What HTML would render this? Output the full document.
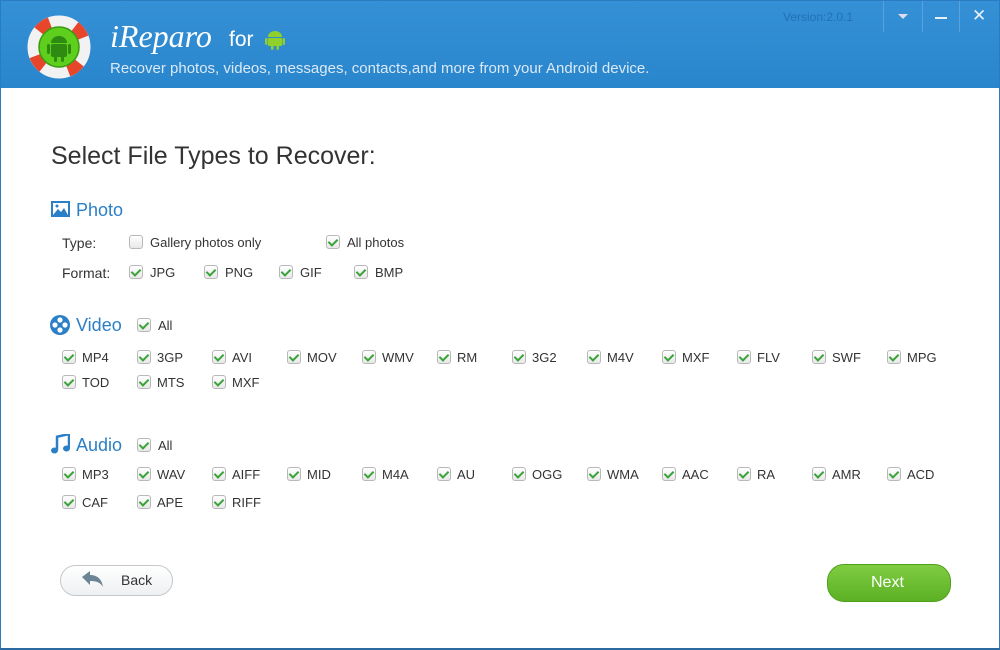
<!DOCTYPE html>
<html><head><meta charset="utf-8"><style>
*{margin:0;padding:0;box-sizing:border-box}
body{width:1000px;height:650px;overflow:hidden;background:#fff;font-family:"Liberation Sans",sans-serif;position:relative}
.win{position:absolute;left:0;top:0;width:1000px;height:650px;border:1px solid #2a7cc0;border-bottom:2px solid #2a6aa0}
.hdr{position:absolute;left:0;top:0;width:1000px;height:88px;background:linear-gradient(#3590d6,#2a86cc);}
.t{position:absolute;white-space:nowrap;font-size:13px;color:#333}
.cb{position:absolute;width:14px;height:14px;border:1px solid #b8b8b8;border-radius:3px;background:linear-gradient(#fff,#e8e8e8)}
.cb.c::after{content:"";position:absolute;left:3px;top:1px;width:4px;height:7px;border:solid #3aa33a;border-width:0 2px 2px 0;transform:rotate(45deg)}
.h{position:absolute;font-size:18px;color:#2a7fc6;white-space:nowrap}
.btn{position:absolute;border-radius:17px}
</style></head><body>
<div class="hdr">
<svg style="position:absolute;left:27px;top:15px" width="64" height="64" viewBox="0 0 64 64">
<circle cx="32" cy="32" r="26" fill="none" stroke="#f2f2f2" stroke-width="11"/>
<circle cx="32" cy="32" r="26" fill="none" stroke="#e8462a" stroke-width="11" stroke-dasharray="14 26.85" transform="rotate(-52 32 32)"/>
<circle cx="32" cy="32" r="20" fill="#5fcf1e" stroke="#3a9a10" stroke-width="1.5"/>
<rect x="24" y="29" width="16" height="13" rx="2" fill="#2f8a12"/>
<path d="M24 28a8 7 0 0 1 16 0z" fill="#2f8a12"/>
<rect x="20" y="29" width="3" height="10" rx="1.5" fill="#2f8a12"/><rect x="41" y="29" width="3" height="10" rx="1.5" fill="#2f8a12"/>
<rect x="27" y="41" width="3" height="6" rx="1.5" fill="#2f8a12"/><rect x="34" y="41" width="3" height="6" rx="1.5" fill="#2f8a12"/>
</svg>
<div class="t" style="left:110px;top:18px;font-family:'Liberation Serif',serif;font-style:italic;font-size:32px;color:#fff">iReparo</div>
<div class="t" style="left:229px;top:28px;font-size:21px;color:#fff">for</div>
<svg style="position:absolute;left:265px;top:29px" width="20" height="22" viewBox="0 0 20 22"><path d="M3 8a7 6 0 0 1 14 0z" fill="#8fd12a"/><rect x="3" y="9" width="14" height="8" rx="1" fill="#8fd12a"/><rect x="0" y="9" width="2.5" height="7" rx="1.2" fill="#8fd12a"/><rect x="17.5" y="9" width="2.5" height="7" rx="1.2" fill="#8fd12a"/><rect x="6" y="16" width="2.5" height="5" rx="1.2" fill="#8fd12a"/><rect x="11.5" y="16" width="2.5" height="5" rx="1.2" fill="#8fd12a"/></svg>
<div class="t" style="left:110px;top:60px;font-size:15px;color:#dbe9f6">Recover photos, videos, messages, contacts,and more from your Android device.</div>
<div class="t" style="left:783px;top:10px;font-size:12px;color:#2272b4">Version:2.0.1</div>
<div style="position:absolute;left:883px;top:0;width:1px;height:32px;background:#5aa2dc"></div>
<div style="position:absolute;left:922px;top:0;width:1px;height:32px;background:#5aa2dc"></div>
<div style="position:absolute;left:959px;top:0;width:1px;height:32px;background:#5aa2dc"></div>
<div style="position:absolute;left:898px;top:14px;width:0;height:0;border-left:5px solid transparent;border-right:5px solid transparent;border-top:5px solid #dde"></div>
<div style="position:absolute;left:935px;top:17px;width:12px;height:2px;background:#e8f0f8"></div>
<div class="t" style="left:972px;top:6px;font-size:17px;color:#e8f0f8">✕</div>
</div>
<div class="win"></div>
<div class="t" style="left:51px;top:142px;font-size:25px;color:#333">Select File Types to Recover:</div>

<svg style="position:absolute;left:51px;top:201px" width="19" height="16" viewBox="0 0 19 16"><rect x="0" y="0" width="19" height="16" fill="#2a7fc6"/><rect x="2" y="2" width="15" height="12" fill="#fff"/><path d="M2 14l5-6 3 3 3-4 4 7z" fill="#2a7fc6"/><circle cx="6" cy="5" r="1.5" fill="#2a7fc6"/></svg>
<div class="h" style="left:76px;top:200px">Photo</div>
<div class="t" style="left:62px;top:235px;font-size:14px">Type:</div>
<div class="t" style="left:62px;top:265px;font-size:14px">Format:</div>
<div class="cb" style="left:129px;top:235px"></div><div class="t" style="left:150px;top:235px">Gallery photos only</div>
<div class="cb c" style="left:326px;top:235px"></div><div class="t" style="left:347px;top:235px">All photos</div>
<div class="cb c" style="left:129px;top:265px"></div><div class="t" style="left:150px;top:265px">JPG</div>
<div class="cb c" style="left:204px;top:265px"></div><div class="t" style="left:225px;top:265px">PNG</div>
<div class="cb c" style="left:279px;top:265px"></div><div class="t" style="left:300px;top:265px">GIF</div>
<div class="cb c" style="left:354px;top:265px"></div><div class="t" style="left:375px;top:265px">BMP</div>

<svg style="position:absolute;left:50px;top:315px" width="20" height="20" viewBox="0 0 20 20"><circle cx="10" cy="10" r="10" fill="#2a7fc6"/><circle cx="10" cy="5" r="2.6" fill="#fff"/><circle cx="10" cy="15" r="2.6" fill="#fff"/><circle cx="5" cy="10" r="2.6" fill="#fff"/><circle cx="15" cy="10" r="2.6" fill="#fff"/></svg>
<div class="h" style="left:76px;top:315px">Video</div>
<div class="cb c" style="left:137px;top:318px"></div><div class="t" style="left:158px;top:318px">All</div>

<svg style="position:absolute;left:51px;top:434px" width="19" height="20" viewBox="0 0 19 20"><path d="M5 3l13-3v14" fill="none" stroke="#2a7fc6" stroke-width="2.5"/><path d="M6 3v13" stroke="#2a7fc6" stroke-width="2.5"/><ellipse cx="3.5" cy="16.5" rx="3.5" ry="3" fill="#2a7fc6"/><ellipse cx="15.5" cy="14.5" rx="3.5" ry="3" fill="#2a7fc6"/></svg>
<div class="h" style="left:76px;top:435px">Audio</div>
<div class="cb c" style="left:137px;top:438px"></div><div class="t" style="left:158px;top:438px">All</div>

<div id="grid"></div>
<script>
var rows=[[350,["MP4","3GP","AVI","MOV","WMV","RM","3G2","M4V","MXF","FLV","SWF","MPG"]],[375,["TOD","MTS","MXF"]],[467,["MP3","WAV","AIFF","MID","M4A","AU","OGG","WMA","AAC","RA","AMR","ACD"]],[495,["CAF","APE","RIFF"]]];
var h="";rows.forEach(function(r){r[1].forEach(function(n,i){var x=62+75*i;h+='<div class="cb c" style="left:'+x+'px;top:'+r[0]+'px"></div><div class="t" style="left:'+(x+20)+'px;top:'+r[0]+'px">'+n+'</div>';});});
document.getElementById("grid").innerHTML=h;
</script>

<div class="btn" style="left:60px;top:565px;width:113px;height:31px;border:1px solid #c4c8cc;background:linear-gradient(#fff,#eef0f2)"></div>
<svg style="position:absolute;left:82px;top:571px" width="22" height="16" viewBox="0 0 22 16"><path d="M0 6l8-6v4c8 0 12 5 13 12-3-5-7-6-13-6v4z" fill="#6d8494"/></svg>
<div class="t" style="left:121px;top:572px;font-size:14px">Back</div>
<div class="btn" style="left:827px;top:564px;width:124px;height:38px;border:1px solid #4fa11c;background:linear-gradient(#80cc42,#5cb024)"></div>
<div class="t" style="left:871px;top:574px;font-size:16px;color:#fff">Next</div>
</body></html>
